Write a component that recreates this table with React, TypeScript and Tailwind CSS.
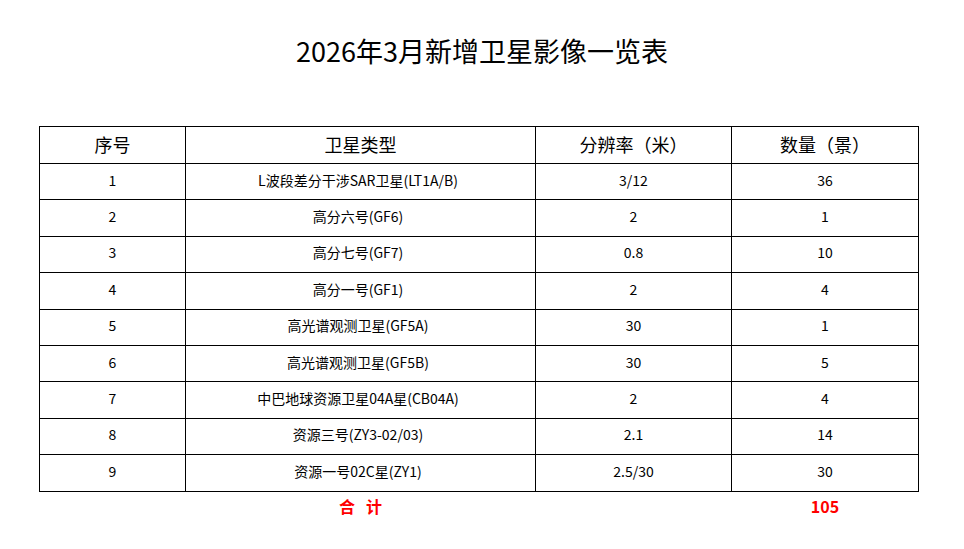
const rows = [
  ["1", "L波段差分干涉SAR卫星(LT1A/B)", "3/12", "36"],
  ["2", "高分六号(GF6)", "2", "1"],
  ["3", "高分七号(GF7)", "0.8", "10"],
  ["4", "高分一号(GF1)", "2", "4"],
  ["5", "高光谱观测卫星(GF5A)", "30", "1"],
  ["6", "高光谱观测卫星(GF5B)", "30", "5"],
  ["7", "中巴地球资源卫星04A星(CB04A)", "2", "4"],
  ["8", "资源三号(ZY3-02/03)", "2.1", "14"],
  ["9", "资源一号02C星(ZY1)", "2.5/30", "30"],
];

export default function App() {
  return (
    <div
      className="w-[964px] h-[549px] bg-white text-black overflow-hidden"
      style={{ fontFamily: '"Noto Sans CJK SC", "Noto Sans", sans-serif' }}
    >
      <h1 className="pt-[32px] h-[126px] text-center text-[27px] leading-[38px]">
        2026年3月新增卫星影像一览表
      </h1>
      <table className="ml-[39px] w-[879px] border-collapse table-fixed">
        <colgroup>
          <col className="w-[146px]" />
          <col className="w-[350px]" />
          <col className="w-[196px]" />
          <col className="w-[187px]" />
        </colgroup>
        <thead>
          <tr className="h-[37px] text-[18px]">
            <th className="border border-black font-normal p-0 pb-[2px]">序号</th>
            <th className="border border-black font-normal p-0 pb-[2px]">卫星类型</th>
            <th className="border border-black font-normal p-0 pb-[2px]">分辨率（米）</th>
            <th className="border border-black font-normal p-0 pb-[2px]">数量（景）</th>
          </tr>
        </thead>
        <tbody>
          {rows.map((r) => (
            <tr key={r[0]} className="h-[36.4px] text-[14px]">
              {r.map((c, i) => (
                <td
                  key={i}
                  className={`border border-black text-center p-0 pb-[3px] ${i === 1 ? "pr-[5px]" : ""}`}
                >
                  {c}
                </td>
              ))}
            </tr>
          ))}
          <tr className="h-[32px] text-[16px] font-bold text-[#ff0000]">
            <td className="p-0" />
            <td className="p-0 pb-[2px] text-center">合&nbsp;&nbsp;&nbsp;计</td>
            <td className="p-0" />
            <td className="p-0 pb-[2px] text-center">105</td>
          </tr>
        </tbody>
      </table>
    </div>
  );
}
